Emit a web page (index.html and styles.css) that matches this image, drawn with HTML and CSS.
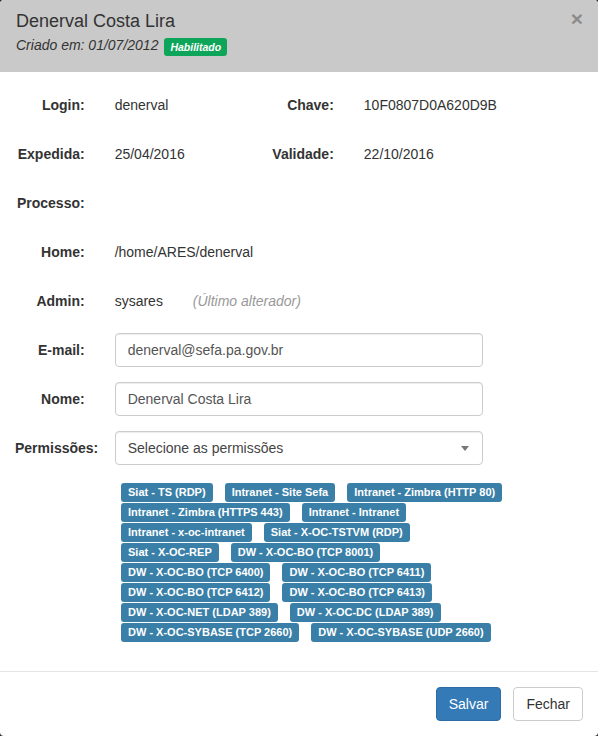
FILE: index.html
```html
<!DOCTYPE html>
<html lang="pt-BR">
<head>
<meta charset="utf-8">
<title>Denerval Costa Lira</title>
<link rel="stylesheet" href="styles.css">
</head>
<body>
<div class="modal">
  <div class="modal-header">
    <span class="close">&times;</span>
    <h4 class="title">Denerval Costa Lira</h4>
    <div class="sub"><i>Criado em: 01/07/2012</i> <span class="badge">Habilitado</span></div>
  </div>
  <div class="modal-body">
    <div class="row">
      <div class="lbl">Login:</div>
      <div class="val w3">denerval</div>
      <div class="lbl">Chave:</div>
      <div class="val">10F0807D0A620D9B</div>
    </div>
    <div class="row">
      <div class="lbl">Expedida:</div>
      <div class="val w3">25/04/2016</div>
      <div class="lbl">Validade:</div>
      <div class="val">22/10/2016</div>
    </div>
    <div class="row">
      <div class="lbl">Processo:</div>
      <div class="val"></div>
    </div>
    <div class="row">
      <div class="lbl">Home:</div>
      <div class="val">/home/ARES/denerval</div>
    </div>
    <div class="row">
      <div class="lbl">Admin:</div>
      <div class="val">sysares <span class="note">(Último alterador)</span></div>
    </div>
    <div class="row">
      <div class="lbl">E-mail:</div>
      <div class="field"><div class="input">denerval@sefa.pa.gov.br</div></div>
    </div>
    <div class="row">
      <div class="lbl">Nome:</div>
      <div class="field"><div class="input">Denerval Costa Lira</div></div>
    </div>
    <div class="row last">
      <div class="lbl">Permissões:</div>
      <div class="field"><div class="input select">Selecione as permissões<span class="caret"></span></div></div>
    </div>
    <div class="tags">
      <span class="tag">Siat - TS (RDP)</span>
      <span class="tag">Intranet - Site Sefa</span>
      <span class="tag">Intranet - Zimbra (HTTP 80)</span>
      <span class="tag">Intranet - Zimbra (HTTPS 443)</span>
      <span class="tag">Intranet - Intranet</span>
      <span class="tag">Intranet - x-oc-intranet</span>
      <span class="tag">Siat - X-OC-TSTVM (RDP)</span>
      <span class="tag">Siat - X-OC-REP</span>
      <span class="tag">DW - X-OC-BO (TCP 8001)</span>
      <span class="tag">DW - X-OC-BO (TCP 6400)</span>
      <span class="tag">DW - X-OC-BO (TCP 6411)</span>
      <span class="tag">DW - X-OC-BO (TCP 6412)</span>
      <span class="tag">DW - X-OC-BO (TCP 6413)</span>
      <span class="tag">DW - X-OC-NET (LDAP 389)</span>
      <span class="tag">DW - X-OC-DC (LDAP 389)</span>
      <span class="tag">DW - X-OC-SYBASE (TCP 2660)</span>
      <span class="tag">DW - X-OC-SYBASE (UDP 2660)</span>
    </div>
  </div>
  <div class="modal-footer">
    <button class="btn primary">Salvar</button>
    <button class="btn default">Fechar</button>
  </div>
</div>
</body>
</html>
```
FILE: styles.css
```css
* { box-sizing: border-box; }
html, body { margin: 0; padding: 0; }
body {
  background: #1f2d3d;
  font-family: "Liberation Sans", Arial, Helvetica, sans-serif;
  font-size: 14px;
  line-height: 20px;
  color: #333;
}
.modal {
  width: 598px;
  height: 736px;
  background: #fff;
  border-radius: 4px;
  overflow: hidden;
  display: flex;
  flex-direction: column;
}
.modal-header {
  position: relative;
  height: 72px;
  background: #c9c9c9;
  padding: 11px 16px 0;
}
.close {
  position: absolute;
  top: 8px;
  right: 15px;
  font-size: 21px;
  font-weight: bold;
  line-height: 21px;
  color: #8c8c8c;
}
.title {
  margin: 0 0 4px;
  font-size: 18px;
  font-weight: normal;
  line-height: 20px;
  color: #333;
}
.sub {
  display: flex;
  align-items: center;
  height: 20px;
  font-size: 14px;
  color: #333;
}
.badge {
  display: inline-block;
  margin-left: 6px;
  margin-top: 3px;
  height: 18px;
  line-height: 18px;
  padding: 0 6px;
  background: #0da55a;
  color: #fff;
  font-size: 10.5px;
  font-weight: bold;
  font-style: italic;
  border-radius: 3px;
}
.modal-body {
  flex: 1;
  padding: 16px 0 0;
}
.row {
  display: flex;
  height: 34px;
  margin-bottom: 15px;
}
.row.last { margin-bottom: 18px; }
.lbl {
  width: 99.67px;
  flex: none;
  padding: 7px 15px 0;
  text-align: right;
  font-weight: bold;
  white-space: nowrap;
}
.val {
  padding: 7px 15px 0;
  white-space: nowrap;
}
.val.w3 { width: 149.5px; flex: none; }
.note {
  margin-left: 26px;
  font-style: italic;
  color: #999;
}
.field {
  width: 398.67px;
  padding: 0 15px;
}
.input {
  position: relative;
  height: 34px;
  padding: 6px 12px;
  border: 1px solid #ccc;
  border-radius: 4px;
  color: #555;
  box-shadow: inset 0 1px 1px rgba(0,0,0,.075);
}
.select { color: #444; }
.caret {
  position: absolute;
  right: 13px;
  top: 14px;
  width: 0;
  height: 0;
  border-style: solid;
  border-width: 5px 4px 0;
  border-color: #777 transparent transparent;
}
.tags {
  display: flex;
  flex-wrap: wrap;
  width: 402px;
  margin-left: 121px;
  margin-top: 1px;
}
.tag {
  height: 19px;
  margin: 0 12px 1px 0;
  padding: 0 7px;
  line-height: 19px;
  background: #3a7fa8;
  color: #fff;
  font-size: 11px;
  font-weight: bold;
  border-radius: 3px;
  white-space: nowrap;
}
.modal-footer {
  display: flex;
  justify-content: flex-end;
  gap: 12px;
  padding: 15px;
  border-top: 1px solid #e5e5e5;
}
.btn {
  height: 34px;
  padding: 6px 12px;
  font-family: inherit;
  font-size: 14px;
  line-height: 20px;
  border-radius: 4px;
  border: 1px solid;
}
.primary { background: #337ab7; border-color: #2e6da4; color: #fff; }
.default { background: #fff; border-color: #ccc; color: #333; }
```
